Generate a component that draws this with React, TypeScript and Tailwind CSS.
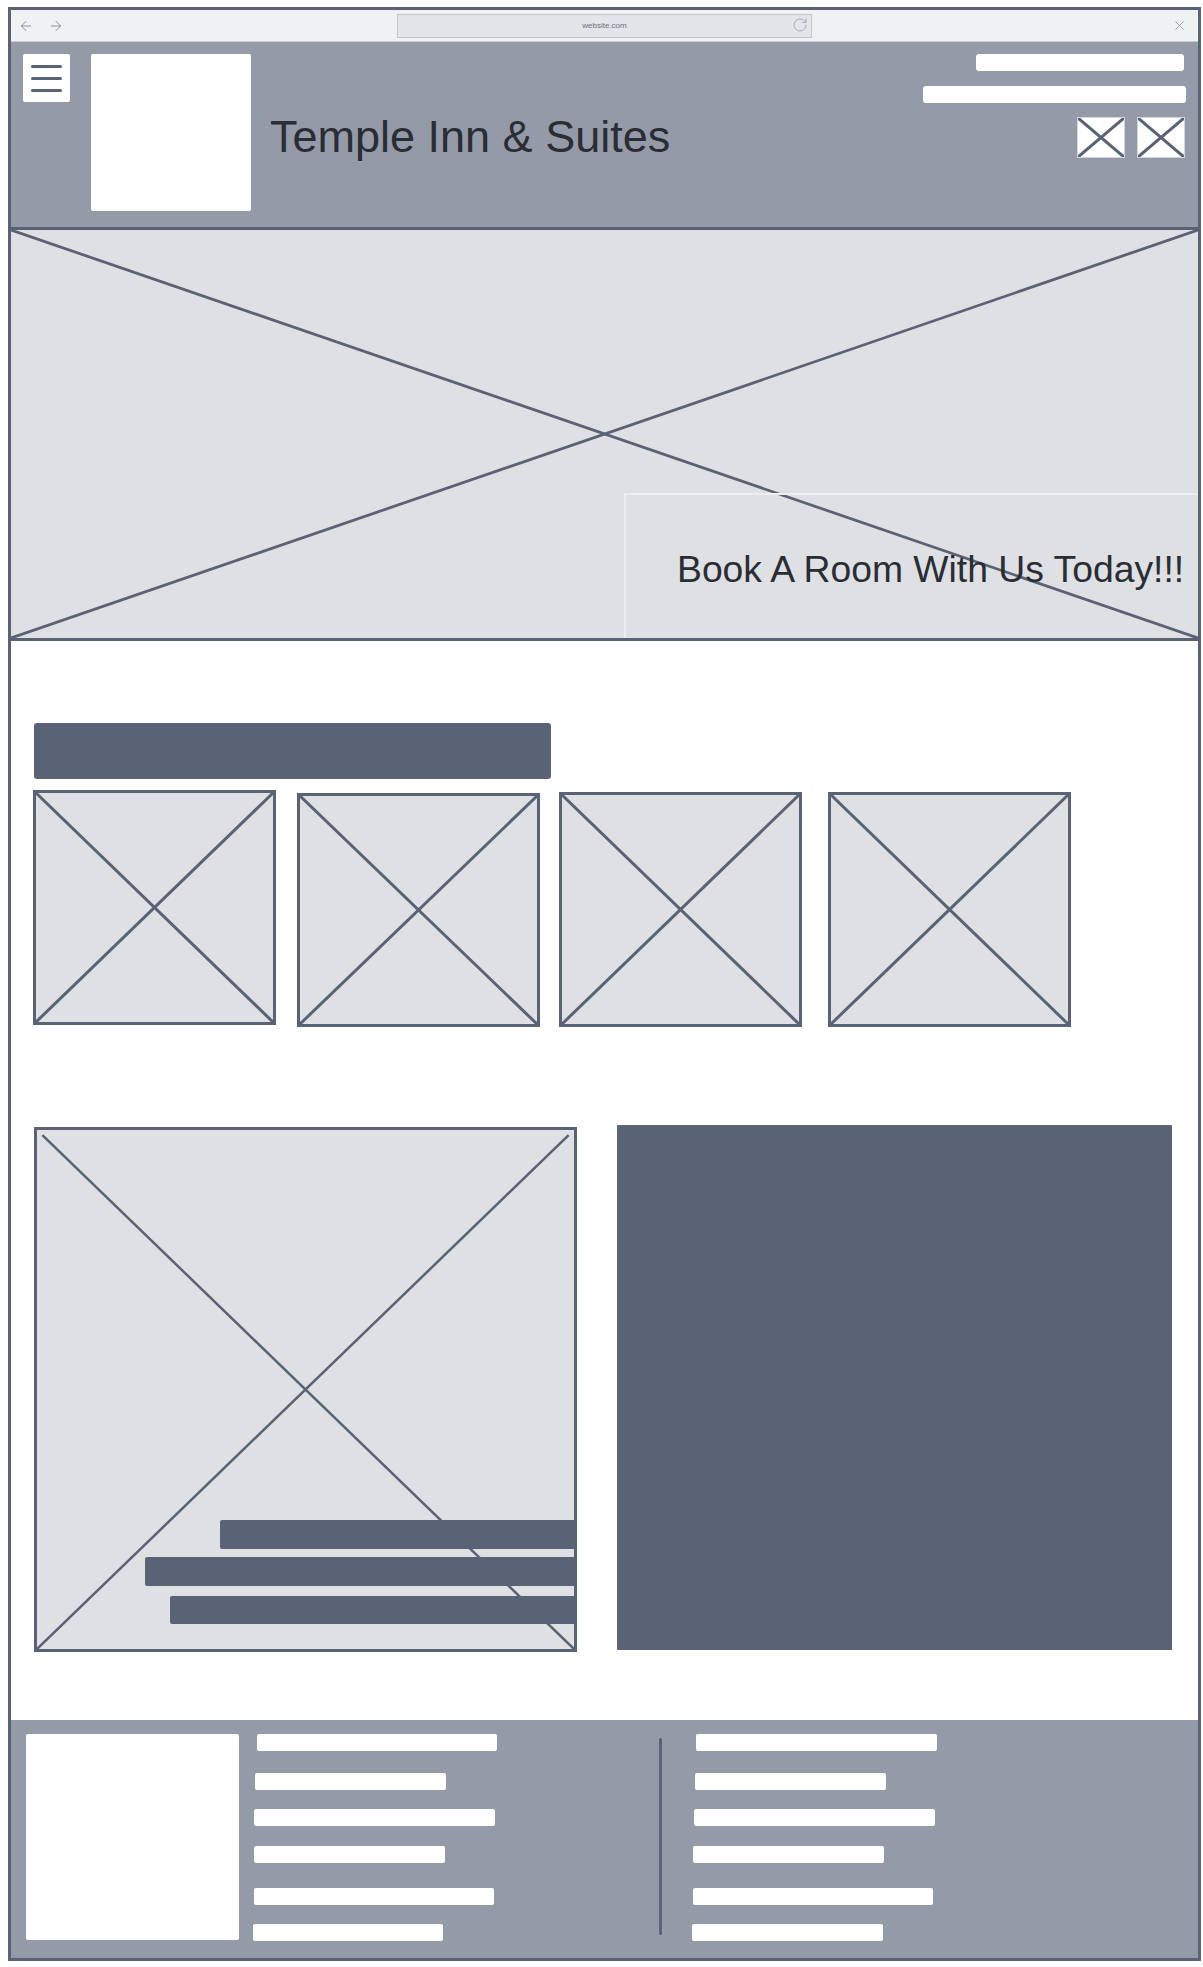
import { ArrowLeft, ArrowRight, RotateCw, X } from 'lucide-react';

const DARK = '#5a6276';

function Cross({ width = 2, inset = 0 }: { width?: number; inset?: number }) {
  return (
    <svg
      className="absolute inset-0 h-full w-full"
      viewBox="0 0 100 100"
      preserveAspectRatio="none"
    >
      <line x1={inset} y1={inset} x2="100" y2="100" stroke={DARK} strokeWidth={width} vectorEffect="non-scaling-stroke" />
      <line x1={100 - inset} y1={inset} x2="0" y2="100" stroke={DARK} strokeWidth={width} vectorEffect="non-scaling-stroke" />
    </svg>
  );
}

const footerRows = [
  { mt: 'mt-0', left: 'w-[240px] ml-[3px]', right: 'w-[241px] ml-[2px]' },
  { mt: 'mt-[22px]', left: 'w-[191px] ml-[1px]', right: 'w-[191px] ml-[1px]' },
  { mt: 'mt-[19px]', left: 'w-[241px]', right: 'w-[241px]' },
  { mt: 'mt-[20px]', left: 'w-[191px]', right: 'w-[191px] -ml-[1px]' },
  { mt: 'mt-[25px]', left: 'w-[240px]', right: 'w-[240px] -ml-[1px]' },
  { mt: 'mt-[19px]', left: 'w-[190px] -ml-[1px]', right: 'w-[191px] -ml-[2px]' },
];

export default function App() {
  return (
    <div className="min-h-[1967px] bg-white pl-[8px] pt-[7px] font-['Liberation_Sans',Arial,sans-serif]">
      <div className="flex h-[1954px] w-[1193px] flex-col overflow-hidden border-[3px] border-[#5a6276]">
        {/* Browser bar */}
        <div className="flex h-[32px] shrink-0 items-center border-b border-[#c9ccd3] bg-[#f0f1f3] pl-[7px] pr-[11px]">
          <ArrowLeft className="h-[16px] w-[16px] text-[#8d929e]" strokeWidth={1.5} />
          <ArrowRight className="ml-[14px] h-[16px] w-[16px] text-[#8d929e]" strokeWidth={1.5} />
          <div className="relative ml-[333px] flex h-[24px] w-[415px] items-center justify-center border border-[#c3c6cc] bg-[#e4e5e9]">
            <span className="text-[8px] text-[#6b7080]">website.com</span>
            <RotateCw className="absolute right-[3px] top-[2px] h-[16px] w-[16px] text-[#9a9ea9]" strokeWidth={1.2} />
          </div>
          <X className="ml-auto h-[15px] w-[15px] text-[#8d929e]" strokeWidth={1.3} />
        </div>

        {/* Header */}
        <header className="flex h-[188px] shrink-0 border-b-[3px] border-[#5a6276] bg-[#959aa8] pl-[12px] pr-[12px] pt-[12px]">
          <div className="flex h-[48px] w-[47px] flex-col items-center justify-center gap-[9px] rounded-[2px] bg-white">
            <span className="h-[3px] w-[31px] rounded-full bg-[#5a6276]" />
            <span className="h-[3px] w-[31px] rounded-full bg-[#5a6276]" />
            <span className="h-[3px] w-[31px] rounded-full bg-[#5a6276]" />
          </div>
          <div className="ml-[21px] h-[157px] w-[160px] rounded-[2px] bg-white" />
          <h1 className="mb-[9px] ml-[19px] self-center text-[45px] leading-none text-[#2a2d34]">
            Temple Inn &amp; Suites
          </h1>
          <div className="ml-auto flex flex-col items-end">
            <div className="mr-[2px] h-[17px] w-[208px] rounded-[3px] bg-white" />
            <div className="mt-[15px] h-[17px] w-[263px] rounded-[3px] bg-white" />
            <div className="mr-[1px] mt-[14px] flex gap-[12px]">
              <div className="relative h-[41px] w-[48px] border border-[#d3d6dc] bg-white">
                <Cross width={3} />
              </div>
              <div className="relative h-[41px] w-[48px] border border-[#d3d6dc] bg-white">
                <Cross width={3} />
              </div>
            </div>
          </div>
        </header>

        {/* Hero */}
        <section className="relative h-[411px] shrink-0 border-b-[3px] border-[#5a6276] bg-[#dfe0e4]">
          <Cross width={2.8} />
          <div className="absolute bottom-0 right-0 flex h-[145px] w-[574px] items-center border-l-2 border-t-2 border-[#eceef1] pl-[51px] pt-[6px]">
            <p className="text-[37.3px] leading-none text-[#2a2d34]">Book A Room With Us Today!!!</p>
          </div>
        </section>

        {/* Main content */}
        <main className="h-[1079px] shrink-0 pl-[23px] pt-[82px]">
          <div className="h-[56px] w-[517px] rounded-[3px] bg-[#5a6276]" />

          <div className="mt-[11px] flex items-start">
            <div className="relative -ml-[1px] h-[235px] w-[243px] border-[3px] border-[#5a6276] bg-[#dfe0e4]">
              <Cross width={3} />
            </div>
            <div className="relative ml-[21px] mt-[3px] h-[234px] w-[243px] border-[3px] border-[#5a6276] bg-[#dfe0e4]">
              <Cross width={3} />
            </div>
            <div className="relative ml-[19px] mt-[2px] h-[235px] w-[243px] border-[3px] border-[#5a6276] bg-[#dfe0e4]">
              <Cross width={3} />
            </div>
            <div className="relative ml-[26px] mt-[2px] h-[235px] w-[243px] border-[3px] border-[#5a6276] bg-[#dfe0e4]">
              <Cross width={3} />
            </div>
          </div>

          <div className="mt-[100px] flex items-start">
            <div className="relative h-[525px] w-[543px] border-[3px] border-[#5a6276] bg-[#dfe0e4]">
              <Cross width={2.5} inset={1} />
              <div className="absolute bottom-[25px] right-0 flex flex-col items-end">
                <div className="h-[29px] w-[354px] rounded-l-[2px] bg-[#5a6276]" />
                <div className="mt-[8px] h-[29px] w-[429px] rounded-l-[2px] bg-[#5a6276]" />
                <div className="mt-[10px] h-[28px] w-[404px] rounded-l-[2px] bg-[#5a6276]" />
              </div>
            </div>
            <div className="-mt-[2px] ml-[40px] h-[525px] w-[555px] rounded-[1px] bg-[#5a6276]" />
          </div>
        </main>

        {/* Footer */}
        <footer className="flex flex-1 bg-[#959aa8] pl-[15px] pt-[14px]">
          <div className="h-[206px] w-[213px] rounded-[2px] bg-white" />
          <div className="ml-[15px] flex w-[243px] flex-col">
            {footerRows.map((r, i) => (
              <div key={i} className={`h-[17px] rounded-[2px] bg-white ${r.mt} ${r.left}`} />
            ))}
          </div>
          <div className="ml-[162px] mt-[4px] h-[197px] w-[3px] rounded-full bg-[#5a6276]" />
          <div className="ml-[32px] flex w-[243px] flex-col">
            {footerRows.map((r, i) => (
              <div key={i} className={`h-[17px] rounded-[2px] bg-white ${r.mt} ${r.right}`} />
            ))}
          </div>
        </footer>
      </div>
    </div>
  );
}
